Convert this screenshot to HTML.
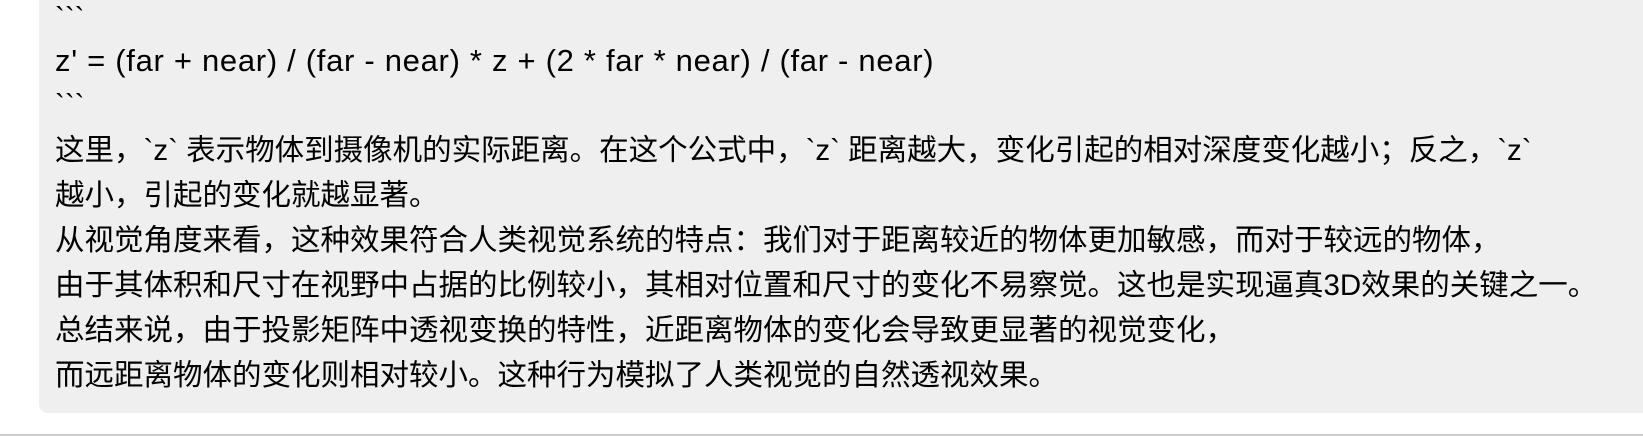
<!DOCTYPE html>
<html><head><meta charset="utf-8"><style>
html,body{margin:0;padding:0;background:#ffffff}
body{width:1643px;height:436px;position:relative;overflow:hidden}
.box{position:absolute;left:39px;top:0;width:1604px;height:413px;background:#efefef;border-bottom-left-radius:9px}
.t{position:absolute;left:55px;top:-4px;color:#000000;font-family:"Liberation Sans","Noto Sans CJK SC",sans-serif;font-size:29.5px;line-height:45px;z-index:2}
.t div{white-space:pre;height:45px}
.hr{position:absolute;left:0;top:434px;width:1643px;height:2px;background:#cccccc}
</style></head><body>
<div class="box"></div>
<div class="t">
<div>&#96;&#96;&#96;</div>
<div style="font-size:31px;letter-spacing:0.7px;margin-top:-3px">z' = (far + near) / (far - near) * z + (2 * far * near) / (far - near)</div>
<div style="height:45px">&#96;&#96;&#96;</div>
<div>这里，&#96;z&#96; 表示物体到摄像机的实际距离。在这个公式中，&#96;z&#96; 距离越大，变化引起的相对深度变化越小；反之，&#96;z&#96;</div>
<div>越小，引起的变化就越显著。</div>
<div>从视觉角度来看，这种效果符合人类视觉系统的特点：我们对于距离较近的物体更加敏感，而对于较远的物体，</div>
<div>由于其体积和尺寸在视野中占据的比例较小，其相对位置和尺寸的变化不易察觉。这也是实现逼真3D效果的关键之一。</div>
<div>总结来说，由于投影矩阵中透视变换的特性，近距离物体的变化会导致更显著的视觉变化，</div>
<div>而远距离物体的变化则相对较小。这种行为模拟了人类视觉的自然透视效果。</div>
</div>
<div class="hr"></div>
</body></html>
